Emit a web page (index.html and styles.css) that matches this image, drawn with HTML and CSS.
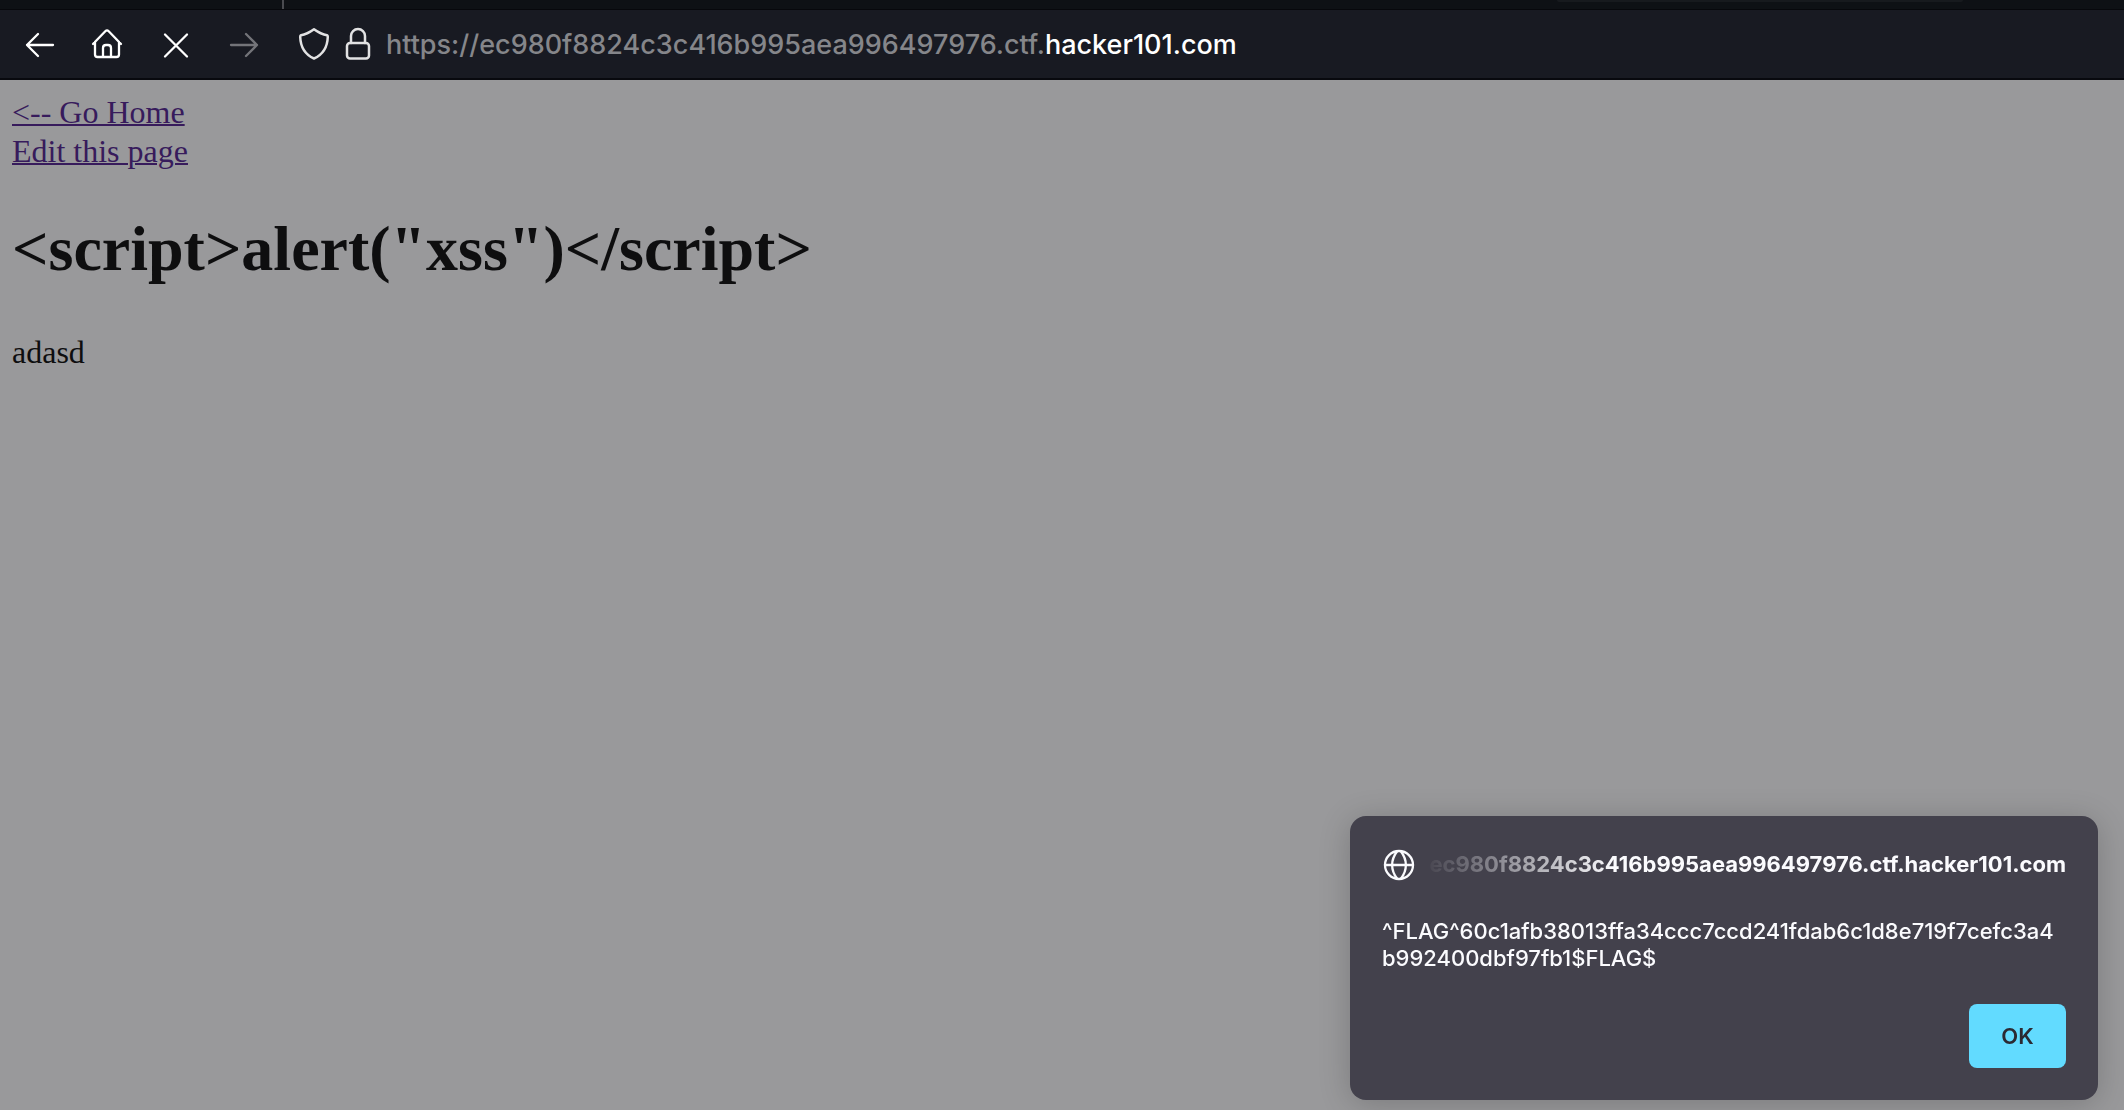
FILE: index.html
```html
<!DOCTYPE html>
<html lang="en">
<head>
<meta charset="utf-8">
<title>hacker101.com</title>
<link rel="stylesheet" href="styles.css">
</head>
<body>
<div class="tabstrip"><span class="tab-divider"></span><span class="tab-tip"></span></div>
<header class="toolbar">
  <nav class="nav" aria-label="Browser">
    <button class="icon" type="button" aria-label="Back"><svg viewBox="0 0 32 32" stroke-width="2.300"><path d="M29 16H3M14 5 3 16l11 11"/></svg></button>
    <button class="icon" type="button" aria-label="Home"><svg viewBox="0 0 32 32" stroke-width="2.300"><path d="M1 15 13.300 2.200q1.700-1.700 3.400 0L29 15M3 13v12.500q0 2.500 2.500 2.500h19q2.500 0 2.500-2.500V13M11 28v-9q0-3 3-3h2q3 0 3 3v9"/></svg></button>
    <button class="icon" type="button" aria-label="Stop"><svg viewBox="0 0 32 32" stroke-width="2.300"><path d="m5 5.500 22 22m0-22-22 22"/></svg></button>
    <button class="icon icon-off" type="button" aria-label="Forward" disabled><svg viewBox="0 0 32 32" stroke-width="2.300"><path d="M3 16h26M18 5l11 11-11 11"/></svg></button>
  </nav>
  <div class="address">
    <button class="icon icon-soft" type="button" aria-label="Tracking protection"><svg viewBox="0 0 32 32" stroke-width="2.500"><path d="M16 0.200q-7 5-13 6-.8.300-.8 1.500C2.500 17 6 25 16 29.500 26 25 29.500 17 29.800 7.700q0-1.200-.8-1.500Q23 5.200 16 .2z"/></svg></button>
    <button class="icon icon-soft" type="button" aria-label="Connection secure"><svg viewBox="0 0 32 32" stroke-width="2.500"><rect x="5" y="14" width="22" height="15.500" rx="3"/><path d="M9 14V7a7 7 0 0 1 14 0v7"/></svg></button>
    <div class="url">https://ec980f8824c3c416b995aea996497976.ctf.<span class="domain">hacker101.com</span></div>
  </div>
</header>
<main class="page">
  <a class="link" href="#home">&lt;-- Go Home</a>
  <a class="link" href="#edit">Edit this page</a>
  <h1 class="title">&lt;script&gt;alert("xss")&lt;/script&gt;</h1>
  <p class="text">adasd</p>
</main>
<div class="dialog" role="alertdialog" aria-labelledby="origin" aria-describedby="message">
  <div class="dialog-head">
    <svg class="globe" viewBox="0 0 32 32" stroke-width="2.300" aria-hidden="true"><circle cx="17" cy="17" r="14"/><path d="M3 17h28"/><path d="M15 3.500C8.500 12 8.500 22 15 30.500M19 3.500c6.500 8.500 6.500 18.500 0 27"/></svg>
    <div class="origin" id="origin"><span>ec980f8824c3c416b995aea996497976.ctf.hacker101.com</span></div>
  </div>
  <p class="message" id="message">^FLAG^60c1afb38013ffa34ccc7ccd241fdab6c1d8e719f7cefc3a4<wbr>b992400dbf97fb1$FLAG$</p>
  <div class="actions"><button class="ok" type="button">OK</button></div>
</div>
</body>
</html>
```
FILE: styles.css
```css
* { box-sizing: border-box; }

body {
  margin: 0;
  min-height: 100vh;
  display: flex;
  flex-direction: column;
  background: #99999b;
  font-family: Inter, "Liberation Sans", sans-serif;
}

.tabstrip {
  display: flex;
  justify-content: space-between;
  height: 10px;
  padding: 0 161px 0 282px;
  background: #0e1115;
  border-bottom: 1px solid #07080c;
}
.tab-divider { width: 2px; background: #4a4b50; }
.tab-tip {
  width: 406px;
  height: 2px;
  background: #171a1e;
  border-radius: 0 0 4px 4px;
}

.toolbar {
  display: flex;
  align-items: center;
  gap: 38px;
  height: 70px;
  padding: 2px 24px 0;
  background: #181a22;
  border-bottom: 2px solid #08090e;
}
.nav { display: flex; gap: 36px; }
.icon {
  flex: none;
  width: 32px;
  height: 32px;
  padding: 0;
  border: 0;
  background: none;
  color: #fff;
}
.icon-soft { color: #e2e2e3; }
.icon-off { color: #737479; }
.icon svg, .globe {
  display: block;
  width: 32px;
  height: 32px;
  fill: none;
  stroke: currentColor;
  stroke-linecap: round;
  stroke-linejoin: round;
  overflow: visible;
}
.address { display: flex; align-items: center; gap: 12px; }
.url {
  color: #85868a;
  font-size: 27px;
  font-weight: 500;
  line-height: 34px;
  white-space: nowrap;
}
.domain { color: #fff; }

.page {
  display: flex;
  flex-direction: column;
  align-items: flex-start;
  padding: 13px 12px;
  color: #0e0e0f;
  font-family: "Liberation Serif", serif;
  font-size: 32px;
  line-height: 39px;
}
.link {
  color: #371b5c;
  text-decoration-thickness: 2px;
}
.title {
  margin: 41px 0 47px;
  font-size: 64px;
  line-height: 74px;
}
.text { margin: 0; }

.dialog {
  position: fixed;
  right: 26px;
  bottom: 10px;
  width: 748px;
  padding: 32px;
  border-radius: 16px;
  background: #43414c;
  color: #fbfbfe;
  font-size: 22px;
  font-weight: 500;
  line-height: 27px;
  box-shadow: 0 4px 32px rgba(0, 0, 0, 0.2);
}
.dialog-head { display: flex; align-items: center; gap: 8px; }
.globe { flex: none; }
.origin {
  flex: 1;
  display: flex;
  justify-content: flex-end;
  overflow: hidden;
  font-weight: 700;
  white-space: nowrap;
  -webkit-mask-image: linear-gradient(to right, transparent, #000 192px);
  mask-image: linear-gradient(to right, transparent, #000 192px);
}
.message { margin: 38px 0 32px; }
.actions { display: flex; justify-content: flex-end; }
.ok {
  width: 97px;
  height: 64px;
  border: 0;
  border-radius: 8px;
  background: #62dbff;
  color: #2b2a33;
  font-family: inherit;
  font-size: 22px;
  font-weight: 600;
}
```
